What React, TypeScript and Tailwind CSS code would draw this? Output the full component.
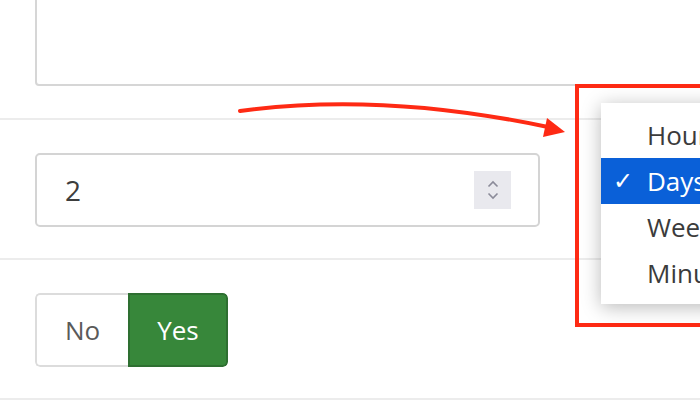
const font = { fontFamily: '"Open Sans", "Liberation Sans", sans-serif' };

function Divider() {
  return <div className="h-[2px] w-full shrink-0 bg-[#ececec]" />;
}

function Spinner() {
  return (
    <div className="flex h-[38px] w-[37px] flex-col items-center justify-center gap-[4px] bg-[#e9e9ee]">
      <svg width="12" height="8" viewBox="0 0 12 8" fill="none" stroke="#8b8b99" strokeWidth="1.6">
        <path d="M1.5 6.5 6 2l4.5 4.5" />
      </svg>
      <svg width="12" height="8" viewBox="0 0 12 8" fill="none" stroke="#8b8b99" strokeWidth="1.6">
        <path d="M1.5 1.5 6 6l4.5-4.5" />
      </svg>
    </div>
  );
}

const units = ["Hours", "Days", "Weeks", "Minutes"];

function UnitMenu() {
  return (
    <div className="absolute left-[575px] top-[84px] h-[243px] w-[160px] border-4 border-[#fe2a14]">
      <div className="absolute left-[22px] top-[15px] h-[201px] w-[140px] bg-white py-[9px] shadow-[0_3px_18px_rgba(0,0,0,0.28)]">
        {units.map((u) => (
          <div
            key={u}
            className={`relative flex h-[46px] items-center whitespace-nowrap pl-[46px] text-[26px] ${
              u === "Days" ? "bg-[#0a60d8] text-white" : "text-[#3b3b3b]"
            }`}
          >
            {u === "Days" && (
              <span className="absolute left-[12px] text-[24px] font-bold" style={{ fontFamily: '"DejaVu Sans", sans-serif' }}>
                ✓
              </span>
            )}
            {u}
          </div>
        ))}
      </div>
    </div>
  );
}

function Arrow() {
  return (
    <svg className="absolute left-0 top-0" width="700" height="410" viewBox="0 0 700 410" fill="none">
      <path d="M240 111 C320 100 420 100 548 127" stroke="#fe2a14" strokeWidth="4" strokeLinecap="round" />
      <polygon points="565,132 547,118 543,137" fill="#fe2a14" />
    </svg>
  );
}

export default function App() {
  return (
    <div className="relative h-[410px] w-[700px] overflow-hidden bg-white" style={font}>
      <div className="flex flex-col">
        <div className="pb-[32px] pl-[35px]">
          <div className="-mt-[20px] h-[106px] w-[720px] rounded-[4px] border-2 border-[#d6d6d6]" />
        </div>
        <Divider />
        <div className="pb-[31px] pl-[35px] pt-[33px]">
          <div className="flex h-[74px] w-[505px] items-center justify-between rounded-[5px] border-2 border-[#d4d4d4] pl-[28px] pr-[27px]">
            <span className="text-[28px] text-[#3d3d3d]">2</span>
            <Spinner />
          </div>
        </div>
        <Divider />
        <div className="pb-[31px] pl-[35px] pt-[33px]">
          <div className="flex h-[74px] w-fit overflow-hidden rounded-[5px]">
            <div className="flex items-center rounded-l-[5px] border-2 border-r-0 border-[#dcdcdc] px-[28px] text-[26px] text-[#5a5a5a]">
              No
            </div>
            <div className="flex items-center rounded-r-[5px] border-2 border-[#2e6f31] bg-[#37873a] px-[27px] text-[26px] text-white">
              Yes
            </div>
          </div>
        </div>
        <Divider />
      </div>
      <Arrow />
      <UnitMenu />
    </div>
  );
}
